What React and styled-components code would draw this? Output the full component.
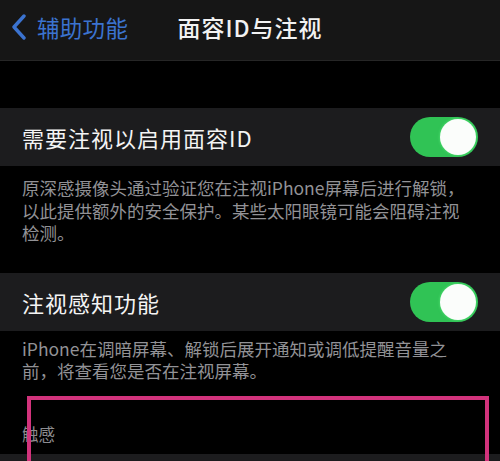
import styled, { createGlobalStyle } from "styled-components";

const Global = createGlobalStyle`
  html, body {
    margin: 0;
    padding: 0;
    background: #000;
  }
  body {
    font-family: "Noto Sans CJK SC", "Noto Sans", sans-serif;
    overflow: hidden;
  }
`;

function Toggle() {
  return (
    <Switch>
      <Knob />
    </Switch>
  );
}

export default function App() {
  return (
    <>
      <Global />
      <Page>
        <Nav>
          <Back>
            <svg width="16" height="26" viewBox="0 0 16 26">
              <path d="M13 2 L3 13 L13 24" fill="none" stroke="#3b73d0" strokeWidth="3.4" strokeLinecap="round" strokeLinejoin="round" />
            </svg>
            <span>辅助功能</span>
          </Back>
          <Title>面容ID与注视</Title>
        </Nav>

        <Group $top={47}>
          <Row>
            <Label>需要注视以启用面容ID</Label>
            <Toggle />
          </Row>
          <Footer $pt={11} $pb={28}>
            原深感摄像头通过验证您在注视iPhone屏幕后进行解锁，<br />
            以此提供额外的安全保护。某些太阳眼镜可能会阻碍注视<br />
            检测。
          </Footer>
        </Group>

        <Group $top={0}>
          <Row>
            <Label>注视感知功能</Label>
            <Toggle />
          </Row>
          <Footer $pt={7} $pb={0}>
            iPhone在调暗屏幕、解锁后展开通知或调低提醒音量之<br />
            前，将查看您是否在注视屏幕。
          </Footer>
        </Group>

        <Section>
          <Header>触感</Header>
          <Row />
          <Mark />
        </Section>
      </Page>
    </>
  );
}

const Page = styled.div`
  width: 500px;
  height: 461px;
  background: #000;
  overflow: hidden;
  color: #fff;
`;

const Nav = styled.div`
  position: relative;
  height: 60px;
  background: #161616;
  border-bottom: 1px solid #262626;
  display: flex;
  align-items: center;
  justify-content: center;
`;

const Back = styled.div`
  position: absolute;
  left: 11px;
  top: 0;
  bottom: 0;
  display: flex;
  align-items: center;
  gap: 10px;
  color: #3b73d0;
  font-size: 22.5px;
  letter-spacing: 0.3px;
  padding-bottom: 6px;
`;

const Title = styled.div`
  font-size: 23px;
  font-weight: 500;
  letter-spacing: 1px;
  color: #f2f2f2;
  padding-bottom: 6px;
`;

const Group = styled.div`
  margin-top: ${(p) => p.$top}px;
`;

const Row = styled.div`
  height: 58px;
  background: #1c1c1e;
  display: flex;
  align-items: center;
  justify-content: space-between;
  padding: 0 22px;
`;

const Label = styled.div`
  font-size: 22px;
  color: #f4f4f4;
  letter-spacing: 1px;
`;

const Switch = styled.div`
  width: 68px;
  height: 40px;
  border-radius: 20px;
  background: #30c355;
  display: flex;
  align-items: center;
  justify-content: flex-end;
  padding: 2px;
  box-sizing: border-box;
`;

const Knob = styled.div`
  width: 36px;
  height: 36px;
  border-radius: 50%;
  background: #fbfdfb;
  box-shadow: 0 0 3px rgba(120, 255, 150, 0.6);
`;

const Footer = styled.div`
  padding: ${(p) => p.$pt}px 22px ${(p) => p.$pb}px;
  font-size: 17.5px;
  line-height: 22.5px;
  color: #929296;
  white-space: nowrap;
`;

const Section = styled.div`
  position: relative;
  padding-top: 41px;
`;

const Header = styled.div`
  padding: 0 22px 10px;
  font-size: 16.5px;
  line-height: 20px;
  color: #8c8c90;
`;

const Mark = styled.div`
  position: absolute;
  left: 27px;
  top: 13px;
  width: 462px;
  height: 120px;
  border: 4px solid #d2337c;
  box-sizing: border-box;
`;
